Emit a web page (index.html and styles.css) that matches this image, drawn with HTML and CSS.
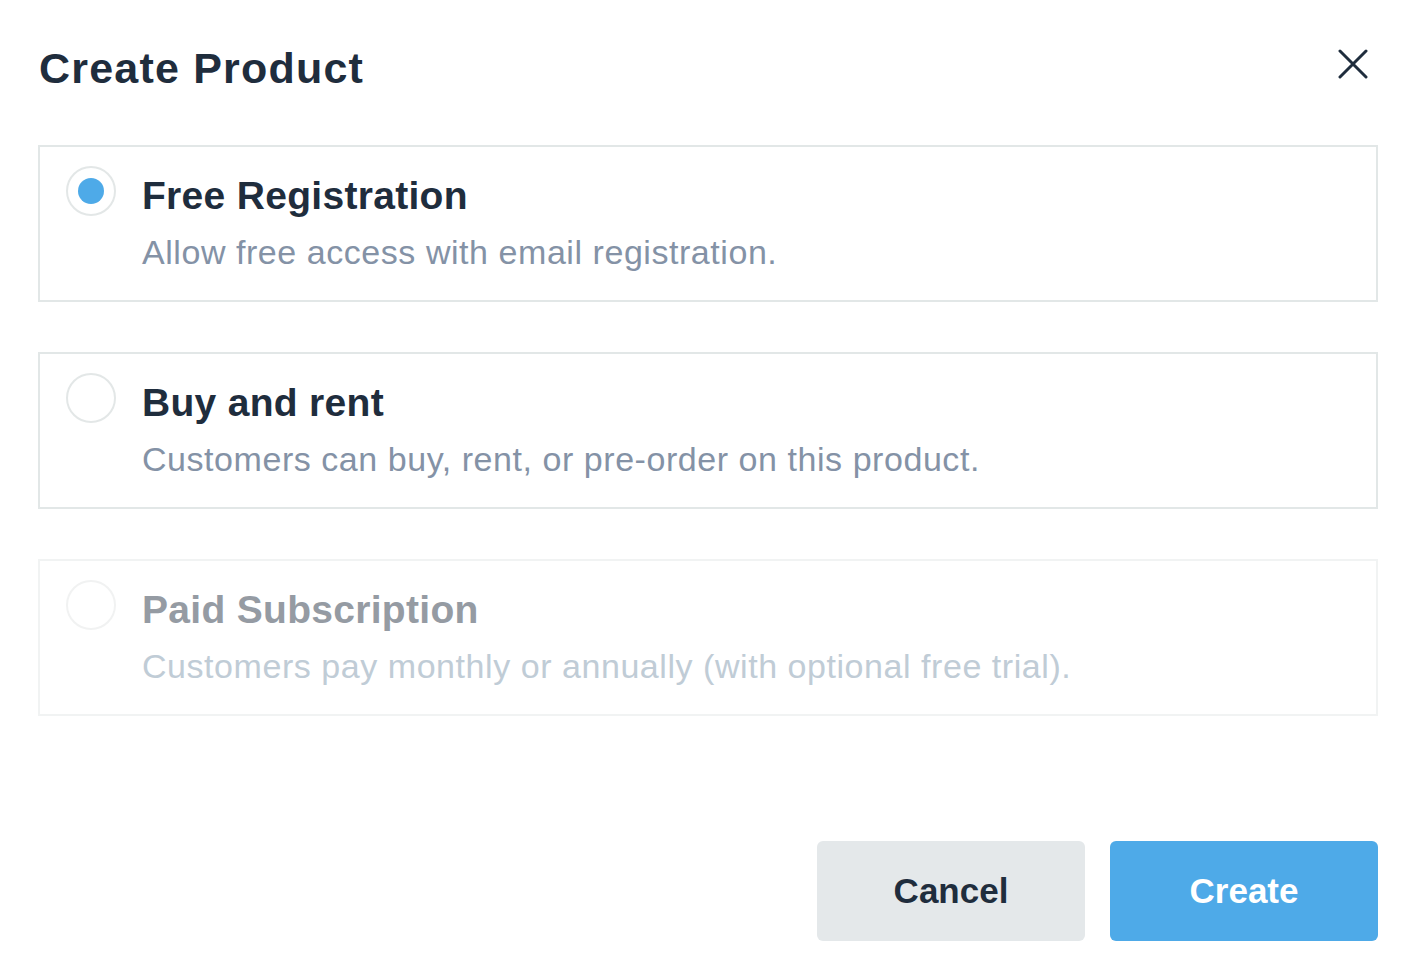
FILE: index.html
```html
<!DOCTYPE html>
<html>
<head>
<meta charset="utf-8">
<link rel="stylesheet" href="styles.css">
</head>
<body>
<div class="modal">
  <div class="header">
    <h1 class="title">Create Product</h1>
    <button class="close" aria-label="Close">
      <svg width="30" height="30" viewBox="0 0 30 30"><path d="M2 2L28 28M28 2L2 28" stroke="#1f2d3d" stroke-width="3" stroke-linecap="round" fill="none"/></svg>
    </button>
  </div>
  <div class="options">
    <div class="option selected">
      <span class="radio"><span class="dot"></span></span>
      <div class="text">
        <div class="opt-title">Free Registration</div>
        <div class="opt-desc">Allow free access with email registration.</div>
      </div>
    </div>
    <div class="option">
      <span class="radio"></span>
      <div class="text">
        <div class="opt-title">Buy and rent</div>
        <div class="opt-desc">Customers can buy, rent, or pre-order on this product.</div>
      </div>
    </div>
    <div class="option disabled">
      <span class="radio"></span>
      <div class="text">
        <div class="opt-title">Paid Subscription</div>
        <div class="opt-desc">Customers pay monthly or annually (with optional free trial).</div>
      </div>
    </div>
  </div>
  <div class="footer">
    <button class="btn btn-cancel">Cancel</button>
    <button class="btn btn-create">Create</button>
  </div>
</div>
</body>
</html>
```
FILE: styles.css
```css
* { box-sizing: border-box; }
html, body { margin: 0; padding: 0; background: #fff; }
body { font-family: "Liberation Sans", Arial, sans-serif; color: #1f2d3d; }
.modal { width: 1418px; height: 974px; padding: 43px 40px 33px 38px; display: flex; flex-direction: column; }
.header { display: flex; justify-content: space-between; align-items: flex-start; margin-bottom: 52px; }
.title { margin: 0; font-size: 43px; line-height: 50px; font-weight: 700; color: #1f2d3d; padding-left: 1px; letter-spacing: 1.2px; }
.close { border: 0; background: none; padding: 0; margin: 6px 10px 0 0; width: 30px; height: 30px; display: block; }
.close svg { display: block; }
.options { display: flex; flex-direction: column; gap: 50px; }
.option { display: flex; align-items: flex-start; gap: 26px; border: 2px solid #e2e7e7; padding: 19px 26px 26px; height: 157px; }
.radio { width: 50px; height: 50px; border-radius: 50%; border: 2px solid #e3e7e7; display: flex; align-items: center; justify-content: center; flex: none; background: #fff; }
.dot { width: 26px; height: 26px; border-radius: 50%; background: #4eaae8; }
.text { padding-top: 8px; }
.opt-title { font-size: 39px; line-height: 44px; font-weight: 700; color: #1f2d3d; letter-spacing: 0.3px; }
.opt-desc { font-size: 34px; line-height: 40px; color: #8492a6; margin-top: 14px; letter-spacing: 0.55px; }
.option.disabled { border-color: #f1f3f3; }
.option.disabled .radio { border-color: #f1f2f2; }
.option.disabled .opt-title { color: #959ba3; }
.option.disabled .opt-desc { color: #c0ccd6; }
.footer { margin-top: auto; display: flex; justify-content: flex-end; gap: 25px; }
.btn { width: 268px; height: 100px; border: 0; border-radius: 6px; font-family: "Liberation Sans", Arial, sans-serif; font-size: 35px; font-weight: 700; cursor: pointer; }
.btn-cancel { background: #e4e8ea; color: #1f2d3d; }
.btn-create { background: #4eaae8; color: #fff; }
```
